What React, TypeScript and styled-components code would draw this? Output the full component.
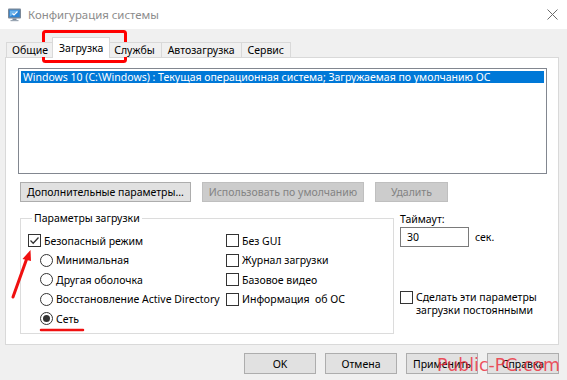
import styled, {createGlobalStyle} from "styled-components";

const GlobalStyle = createGlobalStyle`
    body {
        margin: 0;
        font-family: "Noto Sans", "Liberation Sans", sans-serif;
        font-size: 10.5px;
        color: #000;
    }
`;

const Window = styled.div`
    position: relative;
    width: 567px;
    height: 380px;
    background: #f0f0f0;
    overflow: hidden;
`;

const TitleBar = styled.div`
    height: 29px;
    background: #fff;
    display: flex;
    align-items: center;
    padding: 0 9px 0 7px;
    > .title {
        margin-left: 6px;
        font-size: 11.4px;
        color: #8c8c8c;
        flex: 1;
    }
`;

const Content = styled.div`
    padding: 8px 0 0 5px;
`;

const TabStrip = styled.div`
    display: flex;
    align-items: flex-end;
    height: 20px;
    padding-left: 1px;
    position: relative;
    z-index: 1;
`;

const Tab = styled.div<{ $active?: boolean }>`
    height: ${p => (p.$active ? "21px" : "15px")};
    margin: ${p => (p.$active ? "0 -2px -1px" : "0")};
    padding: 0 6px;
    background: ${p => (p.$active ? "#fff" : "#f0f0f0")};
    border: 1px solid #d9d9d9;
    border-bottom: none;
    border-left-width: ${p => (p.$active ? "1px" : "0")};
    position: relative;
    z-index: ${p => (p.$active ? 2 : 1)};
    display: flex;
    align-items: center;
    white-space: nowrap;
    line-height: 1;
    box-sizing: border-box;
    &:first-child {
        border-left-width: 1px;
        padding: 0 5px;
    }
`;

const Panel = styled.div`
    width: 554px;
    height: 288px;
    box-sizing: border-box;
    border: 1px solid #d9d9d9;
    background: #fff;
    padding: 10px 0 0 12px;
`;

const ListBox = styled.div`
    width: 529px;
    height: 106px;
    box-sizing: border-box;
    border: 1px solid #828790;
    padding: 2px;
`;

const ListItem = styled.div<{ $selected?: boolean }>`
    height: 12px;
    line-height: 12px;
    padding-left: 2px;
    white-space: nowrap;
    background: ${p => (p.$selected ? "#0078d7" : "transparent")};
    color: ${p => (p.$selected ? "#fff" : "#000")};
`;

const ButtonRow = styled.div`
    display: flex;
    gap: 11px;
    margin: 8px 0 0 2px;
`;

const Button = styled.div<{ $width: number; $disabled?: boolean; $height?: number }>`
    width: ${p => p.$width}px;
    height: ${p => p.$height ?? 20}px;
    box-sizing: border-box;
    border: 1px solid ${p => (p.$disabled ? "#bfbfbf" : "#adadad")};
    background: ${p => (p.$disabled ? "#cccccc" : "#e1e1e1")};
    color: ${p => (p.$disabled ? "#838383" : "#000")};
    display: flex;
    align-items: center;
    justify-content: center;
    white-space: nowrap;
`;

const Lower = styled.div`
    display: flex;
    margin: 9px 0 0 2px;
`;

const GroupBox = styled.fieldset`
    margin: 0;
    width: 374px;
    height: 123px;
    box-sizing: border-box;
    border: 1px solid #dcdcdc;
    padding: 6px 0 0 7px;
    min-width: 0;
    display: grid;
    grid-template-columns: 198px 1fr;
    align-content: start;
    > legend {
        padding: 0 2px;
        margin-left: 4px;
        line-height: 14px;
    }
`;

const Column = styled.div`
    display: flex;
    flex-direction: column;
`;

const OptionRow = styled.div<{ $indent?: number }>`
    height: 19.5px;
    display: flex;
    align-items: center;
    gap: 3px;
    padding-left: ${p => p.$indent ?? 0}px;
    white-space: nowrap;
`;

const Box = styled.span`
    width: 13px;
    height: 13px;
    box-sizing: border-box;
    border: 1px solid #333;
    background: #fff;
    display: inline-flex;
    align-items: center;
    justify-content: center;
    flex-shrink: 0;
`;

const Radio = styled.span<{ $on?: boolean }>`
    width: 13px;
    height: 13px;
    box-sizing: border-box;
    border: 1px solid #333;
    border-radius: 50%;
    background: #fff;
    display: inline-flex;
    align-items: center;
    justify-content: center;
    flex-shrink: 0;
    &::after {
        content: "";
        display: ${p => (p.$on ? "block" : "none")};
        width: 7px;
        height: 7px;
        border-radius: 50%;
        background: #333;
    }
`;

const Side = styled.div`
    margin-left: 6px;
    display: flex;
    flex-direction: column;
    > .label {
        line-height: 14px;
        margin-top: 1px;
    }
`;

const TimeoutRow = styled.div`
    display: flex;
    align-items: center;
    gap: 6px;
    margin-top: 1px;
`;

const TextInput = styled.div`
    width: 69px;
    height: 20px;
    box-sizing: border-box;
    border: 1px solid #7a7a7a;
    background: #fff;
    padding-left: 6px;
    display: flex;
    align-items: center;
`;

const PersistRow = styled.div`
    display: flex;
    align-items: flex-start;
    gap: 3px;
    margin-top: 44px;
    line-height: 13px;
`;

const Footer = styled.div`
    display: flex;
    justify-content: flex-end;
    gap: 9px;
    padding: 8px 8px 0 0;
`;

const Overlay = styled.svg`
    position: absolute;
    left: 0;
    top: 0;
    pointer-events: none;
`;

const Watermark = styled.div`
    position: absolute;
    left: 437px;
    top: 354px;
    font-family: "DejaVu Sans", sans-serif;
    font-size: 17.4px;
    line-height: 22px;
    color: rgba(236, 45, 60, 0.82);
    white-space: nowrap;
`;

const Check = () => (
    <svg width="11" height="11" viewBox="0 0 11 11">
        <path d="M1.5 5.5 L4.2 8.2 L9.5 2.5" fill="none" stroke="#333" strokeWidth="1.3"/>
    </svg>
);

const AppIcon = () => (
    <svg width="15" height="15" viewBox="0 0 15 15">
        <rect x="1" y="1.5" width="13" height="10" rx="1" fill="#7a8898"/>
        <rect x="2.3" y="2.8" width="10.4" height="7.4" fill="#2f86d6"/>
        <path d="M3 3.5 L12 3.5 L3 9.5 Z" fill="#7dbef0" opacity="0.8"/>
        <path d="M5.5 6.5 L7 8 L10.5 4.5" fill="none" stroke="#fff" strokeWidth="1.2"/>
        <rect x="5.5" y="11.5" width="4" height="1.5" fill="#7a8898"/>
        <rect x="3.5" y="13" width="8" height="1.2" fill="#9aa6b3"/>
    </svg>
);

const CloseIcon = () => (
    <svg width="11" height="11" viewBox="0 0 11 11">
        <path d="M0.5 0.5 L10.5 10.5 M10.5 0.5 L0.5 10.5" stroke="#6b6b6b" strokeWidth="1"/>
    </svg>
);

const tabs = ["Общие", "Загрузка", "Службы", "Автозагрузка", "Сервис"];

export default function App() {
    return (
        <Window>
            <GlobalStyle/>
            <TitleBar>
                <AppIcon/>
                <span className="title">Конфигурация системы</span>
                <CloseIcon/>
            </TitleBar>
            <Content>
                <TabStrip>
                    {tabs.map(t => (
                        <Tab key={t} $active={t === "Загрузка"}>{t}</Tab>
                    ))}
                </TabStrip>
                <Panel>
                    <ListBox>
                        <ListItem $selected>
                            Windows 10 (C:\Windows) : Текущая операционная система; Загружаемая по умолчанию ОС
                        </ListItem>
                    </ListBox>
                    <ButtonRow>
                        <Button $width={171}>Дополнительные параметры...</Button>
                        <Button $width={162} $disabled>Использовать по умолчанию</Button>
                        <Button $width={73} $disabled>Удалить</Button>
                    </ButtonRow>
                    <Lower>
                        <GroupBox>
                            <legend>Параметры загрузки</legend>
                            <Column>
                                <OptionRow><Box><Check/></Box>Безопасный режим</OptionRow>
                                <OptionRow $indent={12}><Radio/>Минимальная</OptionRow>
                                <OptionRow $indent={12}><Radio/>Другая оболочка</OptionRow>
                                <OptionRow $indent={12}><Radio/>Восстановление Active Directory</OptionRow>
                                <OptionRow $indent={12}><Radio $on/>Сеть</OptionRow>
                            </Column>
                            <Column>
                                <OptionRow><Box/>Без GUI</OptionRow>
                                <OptionRow><Box/>Журнал загрузки</OptionRow>
                                <OptionRow><Box/>Базовое видео</OptionRow>
                                <OptionRow><Box/>Информация&nbsp; об ОС</OptionRow>
                            </Column>
                        </GroupBox>
                        <Side>
                            <span className="label">Таймаут:</span>
                            <TimeoutRow>
                                <TextInput>30</TextInput>
                                <span>сек.</span>
                            </TimeoutRow>
                            <PersistRow>
                                <Box/>
                                <span>Сделать эти параметры<br/>загрузки постоянными</span>
                            </PersistRow>
                        </Side>
                    </Lower>
                </Panel>
                <Footer>
                    <Button $width={72} $height={21}>OK</Button>
                    <Button $width={72} $height={21}>Отмена</Button>
                    <Button $width={72} $height={21}>Применить</Button>
                    <Button $width={72} $height={21}>Справка</Button>
                </Footer>
            </Content>
            <Overlay width="567" height="380">
                <rect x="43.5" y="31.5" width="82" height="30" rx="2" fill="none" stroke="#f00" strokeWidth="3"/>
                <path d="M13 297 L27 258" stroke="#f01010" strokeWidth="3" strokeLinecap="round"/>
                <path d="M30.5 250 L22.5 259 L31 261 Z" fill="#f01010"/>
                <path d="M41 330 L83 330" stroke="#f01010" strokeWidth="2.5" strokeLinecap="round"/>
            </Overlay>
            <Watermark>Public-PC.com</Watermark>
        </Window>
    );
}
